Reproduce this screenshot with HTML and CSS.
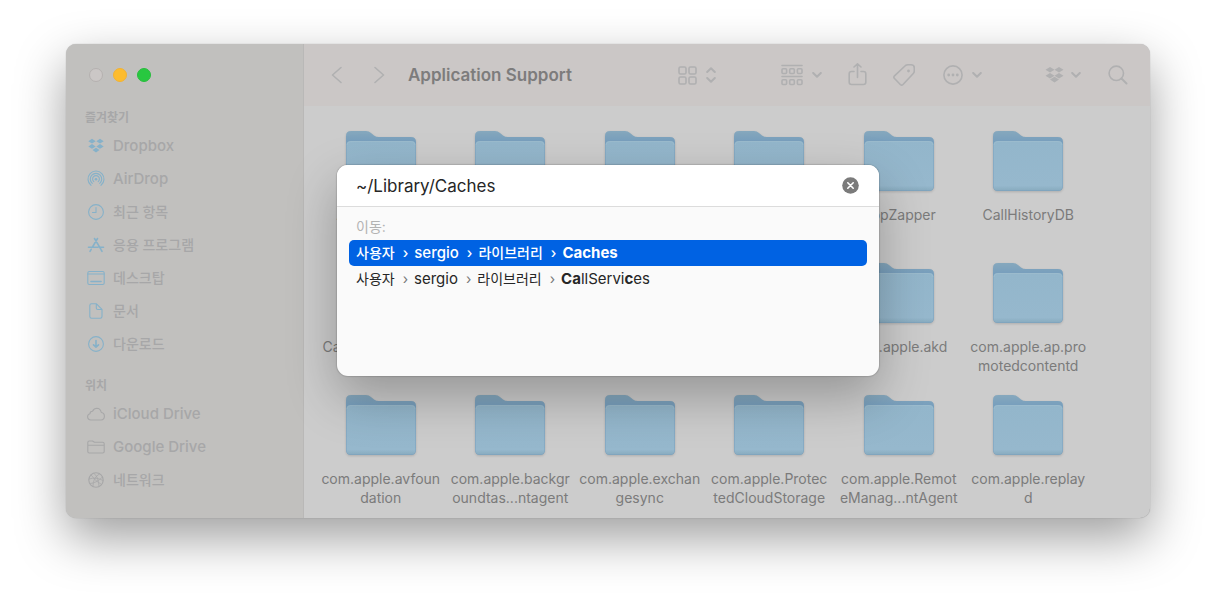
FILE: index.html
```html
<!DOCTYPE html>
<html lang="ko">
<head>
<meta charset="utf-8">
<title>Application Support</title>
<link rel="stylesheet" href="styles.css">
</head>
<body>
<svg class="defs" aria-hidden="true">
  <defs>
    <linearGradient id="front" x1="0" y1="0" x2="0" y2="1">
      <stop offset="0" stop-color="#93b6cb"/><stop offset="0.9" stop-color="#96b8cd"/><stop offset="1" stop-color="#88abbf"/>
    </linearGradient>
    <linearGradient id="back" x1="0" y1="0" x2="0" y2="1">
      <stop offset="0" stop-color="#86a8bd"/><stop offset="0.17" stop-color="#789fbd"/><stop offset="1" stop-color="#789fbd"/>
    </linearGradient>
    <symbol id="folder" viewBox="0 0 70 60">
      <path fill="url(#back)" d="M0 5Q0 0 5 0H20Q23 0 25 2L28 4.500Q30 6 33 6H65Q70 6 70 11V55Q70 60 65 60H5Q0 60 0 55Z"/>
      <path fill="url(#front)" d="M.5 14Q.5 10 5 10H65Q69.500 10 69.500 14V55Q69.500 59.500 65 59.500H5Q.5 59.500 .5 55Z"/>
      <path fill="none" stroke="#9dbccd" stroke-width=".8" d="M1 14Q1 10.500 5 10.500H65Q69 10.500 69 14"/>
    </symbol>
    <symbol id="chevron" viewBox="0 0 10 6"><path class="line bold" d="M1.200 1L5 4.800L8.800 1"/></symbol>
    <symbol id="dropbox" viewBox="0 0 19 16">
      <path fill="currentColor" d="M5 0L9.500 2.800L5 5.600L.5 2.800ZM14 0L18.500 2.800L14 5.600L9.500 2.800ZM5 5.900L9.500 8.700L5 11.500L.5 8.700ZM14 5.900L18.500 8.700L14 11.500L9.500 8.700ZM9.500 9.800L14 12.600L9.500 15.500L5 12.600Z"/>
    </symbol>
  </defs>
</svg>

<main class="window">
  <aside class="sidebar">
    <div class="lights">
      <button class="light" aria-label="닫기"></button>
      <button class="light yellow" aria-label="최소화"></button>
      <button class="light green" aria-label="확대"></button>
    </div>
    <nav>
      <h2>즐겨찾기</h2>
      <ul class="blue">
        <li><a href="#"><svg viewBox="0 0 18 18"><path fill="currentColor" d="M5 1.800L8.700 4.200L5 6.600L1.300 4.200ZM13 1.800L16.700 4.200L13 6.600L9.300 4.200ZM5 7L8.700 9.400L5 11.800L1.300 9.400ZM13 7L16.700 9.400L13 11.800L9.300 9.400ZM9 10.800L12.500 13.100L9 15.500L5.500 13.100Z"/></svg><span class="latin">Dropbox</span></a></li>
        <li><a href="#"><svg viewBox="0 0 18 18"><path class="line" d="M4 15.300A8 8 0 1 1 14 15.300M5.300 13.400A5.700 5.700 0 1 1 12.700 13.400M6.800 11.600A3.400 3.400 0 1 1 11.200 11.600"/><circle cx="9" cy="9.200" r="1.300" fill="currentColor"/></svg><span class="latin">AirDrop</span></a></li>
        <li><a href="#"><svg viewBox="0 0 18 18"><circle class="line" cx="9" cy="9" r="7.400"/><path class="line" d="M9 4.500V9.500H5.500"/></svg><span>최근 항목</span></a></li>
        <li><a href="#"><svg viewBox="0 0 18 18"><path class="line medium" d="M7.500 2.500L13.800 13.200M10.500 2.500L5.500 11M1.500 11.300H11M13.300 11.300H16.500M4.200 13.300L3 15.300M14.200 14L15 15.300"/></svg><span>응용 프로그램</span></a></li>
        <li><a href="#"><svg viewBox="0 0 18 18"><rect class="line" x=".8" y="2.500" width="16.400" height="13" rx="1.500"/><path class="line" d="M1 5H17"/><path class="line medium" d="M4 12.500H14"/></svg><span>데스크탑</span></a></li>
        <li><a href="#"><svg viewBox="0 0 18 18"><path class="line" d="M4.500 1.800H9.500L15 7.300V14.500Q15 16.200 13.300 16.200H4.500Q2.800 16.200 2.800 14.500V3.500Q2.800 1.800 4.500 1.800ZM9.300 2V6Q9.300 7.500 10.800 7.500H15"/></svg><span>문서</span></a></li>
        <li><a href="#"><svg viewBox="0 0 18 18"><circle class="line" cx="9" cy="9" r="7.400"/><path class="line medium" d="M9 5.500V12M6.500 9.800L9 12.200L11.500 9.800"/></svg><span>다운로드</span></a></li>
      </ul>
      <h2>위치</h2>
      <ul>
        <li><a href="#"><svg viewBox="0 0 18 18"><path class="line" d="M4 15Q.6 14.700 .6 11.800Q.6 9.300 3 8.800Q3 6.300 5.500 6.200Q7 3.300 9.800 3.300Q13.500 3.500 14.300 7.500Q17.400 8 17.400 11.200Q17.400 14.700 14 15Z"/></svg><span class="latin">iCloud Drive</span></a></li>
        <li><a href="#"><svg viewBox="0 0 18 18"><path class="line" d="M.8 13.500V4.500Q.8 3 2.300 3H5.500L7.500 4.300H15.700Q17.200 4.300 17.200 5.800V13.500Q17.200 15 15.700 15H2.300Q.8 15 .8 13.500ZM1 7.300H17"/></svg><span class="latin">Google Drive</span></a></li>
        <li><a href="#"><svg viewBox="0 0 18 18"><circle class="line" cx="9" cy="9" r="7.200"/><path class="line thin" d="M7 2.500Q11.500 5 12 15.500M12.500 2.800Q5.500 7 6 15.500M2 8Q9 5.500 16 9.500M3 12.500Q9 12.500 15.500 6M4 4Q9 11 14.500 13.500"/></svg><span>네트워크</span></a></li>
      </ul>
    </nav>
  </aside>

  <section class="pane">
    <header class="toolbar">
      <div class="history">
        <button aria-label="뒤로"><svg width="12" height="18" viewBox="0 0 12 18"><path class="line medium" d="M10 1.500L1.500 9L10 16.500"/></svg></button>
        <button aria-label="앞으로"><svg width="12" height="18" viewBox="0 0 12 18"><path class="line medium" d="M2 1.500L10.500 9L2 16.500"/></svg></button>
      </div>
      <h1>Application Support</h1>
      <button class="view" aria-label="보기"><svg width="19" height="19" viewBox="0 0 19 19"><g class="line medium"><rect x="1" y="1" width="7" height="7" rx="1.500"/><rect x="11" y="1" width="7" height="7" rx="1.500"/><rect x="1" y="11" width="7" height="7" rx="1.500"/><rect x="11" y="11" width="7" height="7" rx="1.500"/></g></svg><svg width="10" height="16" viewBox="0 0 10 16"><path class="line bold" d="M1.200 5L5 1.200L8.800 5M1.200 11L5 14.800L8.800 11"/></svg></button>
      <button class="group" aria-label="그룹"><svg width="22" height="22" viewBox="0 0 22 22"><path class="line medium" d="M1 1.500H21M1 12.500H21"/><g class="line medium"><rect x="1" y="4.700" width="4.600" height="4.800" rx="1"/><rect x="8.700" y="4.700" width="4.600" height="4.800" rx="1"/><rect x="16.400" y="4.700" width="4.600" height="4.800" rx="1"/><rect x="1" y="15.700" width="4.600" height="4.800" rx="1"/><rect x="8.700" y="15.700" width="4.600" height="4.800" rx="1"/><rect x="16.400" y="15.700" width="4.600" height="4.800" rx="1"/></g></svg><svg width="10" height="6"><use href="#chevron"/></svg></button>
      <button class="share" aria-label="공유"><svg width="19" height="24" viewBox="0 0 19 24"><path class="line medium" d="M6 8.500H3.500Q1.200 8.500 1.200 10.700V19.300Q1.200 21.500 3.500 21.500H15.500Q17.800 21.500 17.800 19.300V10.700Q17.800 8.500 15.500 8.500H13M9.500 14.500V1M6 4L9.500 .8L13 4"/></svg></button>
      <button class="tag" aria-label="태그"><svg width="22" height="22" viewBox="0 0 22 22"><path class="line medium" d="M12.500 1.500Q13.500 .8 15 .8H18Q21.300 .8 21.300 4V7Q21.300 8.500 20.300 9.500L10 20.500Q8.700 21.800 7.300 20.500L1.500 14.500Q.2 13.200 1.500 11.900Z"/><circle cx="15.500" cy="7" r="1.400" fill="currentColor"/></svg></button>
      <button class="more" aria-label="동작"><svg width="20" height="20" viewBox="0 0 20 20"><circle class="line medium" cx="10" cy="10" r="9.100"/><g fill="currentColor"><circle cx="5.700" cy="10" r="1.400"/><circle cx="10" cy="10" r="1.400"/><circle cx="14.300" cy="10" r="1.400"/></g></svg><svg width="10" height="6"><use href="#chevron"/></svg></button>
      <button class="cloud" aria-label="Dropbox"><svg width="19" height="16"><use href="#dropbox"/></svg><svg width="10" height="6"><use href="#chevron"/></svg></button>
      <button class="search" aria-label="검색"><svg width="20" height="20" viewBox="0 0 20 20"><circle class="line medium" cx="8.300" cy="8.300" r="7.200"/><path class="line bold" d="M13.500 13.500L18.500 18.500"/></svg></button>
    </header>

    <ul class="files">
      <li><svg class="folder"><use href="#folder"/></svg><span>AddressBook</span></li>
      <li><svg class="folder"><use href="#folder"/></svg></li>
      <li><svg class="folder"><use href="#folder"/></svg></li>
      <li><svg class="folder"><use href="#folder"/></svg></li>
      <li><svg class="folder"><use href="#folder"/></svg><span>AppZapper</span></li>
      <li><svg class="folder"><use href="#folder"/></svg><span>CallHistoryDB</span></li>
      <li><svg class="folder"><use href="#folder"/></svg><span>CallHistoryTransa<br>ctions</span></li>
      <li><svg class="folder"><use href="#folder"/></svg></li>
      <li><svg class="folder"><use href="#folder"/></svg></li>
      <li><svg class="folder"><use href="#folder"/></svg></li>
      <li><svg class="folder"><use href="#folder"/></svg><span>com.apple.akd</span></li>
      <li><svg class="folder"><use href="#folder"/></svg><span>com.apple.ap.pro<br>motedcontentd</span></li>
      <li><svg class="folder"><use href="#folder"/></svg><span>com.apple.avfoun<br>dation</span></li>
      <li><svg class="folder"><use href="#folder"/></svg><span>com.apple.backgr<br>oundtas...ntagent</span></li>
      <li><svg class="folder"><use href="#folder"/></svg><span>com.apple.exchan<br>gesync</span></li>
      <li><svg class="folder"><use href="#folder"/></svg><span>com.apple.Protec<br>tedCloudStorage</span></li>
      <li><svg class="folder"><use href="#folder"/></svg><span>com.apple.Remot<br>eManag...ntAgent</span></li>
      <li><svg class="folder"><use href="#folder"/></svg><span>com.apple.replay<br>d</span></li>
    </ul>
  </section>

  <div class="dialog" role="dialog" aria-label="폴더로 이동">
    <div class="field">
      <input type="text" value="~/Library/Caches" aria-label="이동할 폴더">
      <button class="clear" aria-label="지우기"><svg width="17" height="17" viewBox="0 0 17 17"><circle cx="8.500" cy="8.500" r="8.300" fill="#7b7b7b"/><path d="M5.800 5.800L11.200 11.200M11.200 5.800L5.800 11.200" stroke="#fff" stroke-width="1.600" stroke-linecap="round"/></svg></button>
    </div>
    <div class="results">
      <p class="hint">이동:</p>
      <ul>
        <li class="path selected"><span>사용자</span><i>›</i><span class="latin">sergio</span><i>›</i><span>라이브러리</span><i>›</i><span class="latin"><b>Caches</b></span></li>
        <li class="path"><span>사용자</span><i>›</i><span class="latin">sergio</span><i>›</i><span>라이브러리</span><i>›</i><span class="latin"><b>Ca</b>llServi<b>c</b>es</span></li>
      </ul>
    </div>
  </div>
</main>
</body>
</html>
```
FILE: styles.css
```css
* { box-sizing: border-box; }

body {
  margin: 0;
  padding: 44px 66px 87px;
  background: #fff;
  font-family: Inter, "Noto Sans CJK KR", sans-serif;
  font-size: 14px;
  line-height: 20px;
}

h1, h2, p, ul { margin: 0; padding: 0; }
ul { list-style: none; }
svg { display: block; flex: none; }
.defs { position: absolute; width: 0; height: 0; }

button {
  display: flex;
  align-items: center;
  gap: 9px;
  padding: 0;
  border: 0;
  background: none;
  color: inherit;
}

.line {
  fill: none;
  stroke: currentColor;
  stroke-width: 1.1;
  stroke-linecap: round;
  stroke-linejoin: round;
}
.line.thin { stroke-width: .8; }
.line.medium { stroke-width: 1.6; }
.line.bold { stroke-width: 2; }

.window {
  position: relative;
  display: flex;
  border-radius: 10px;
  background: #ccc;
  box-shadow: 0 0 1px rgba(0, 0, 0, .35), 0 20px 50px rgba(0, 0, 0, .38);
}

.sidebar {
  flex: 0 0 238px;
  border-right: 1px solid #b9b8b7;
  border-radius: 10px 0 0 10px;
  background: #c1c0be;
  color: #a7a7a8;
}

.lights {
  display: flex;
  align-items: center;
  gap: 10px;
  height: 62px;
  padding-left: 23px;
}
.light {
  width: 14px;
  height: 14px;
  border: 1px solid #b5b1b0;
  border-radius: 50%;
  background: #cbc7c6;
}
.light.yellow { border-color: #f2b233; background: #fdbc2e; }
.light.green { border-color: #28bd3d; background: #28c840; }

.sidebar h2 {
  padding-left: 19px;
  font-size: 12px;
  font-weight: 700;
  line-height: 23px;
}
.sidebar ul + h2 { margin-top: 14px; }
.sidebar a {
  display: flex;
  align-items: center;
  gap: 8px;
  height: 33px;
  padding-left: 21px;
  color: inherit;
  font-weight: 500;
  text-decoration: none;
}
.sidebar svg { width: 18px; height: 18px; }
.blue svg { color: #86b1c9; }
.latin { font-size: 15px; }

.pane { flex: 1; min-width: 0; }

.toolbar {
  display: flex;
  align-items: center;
  height: 62px;
  padding: 0 22px 0 27px;
  border-radius: 0 10px 0 0;
  background: #cbc7c6;
  color: #b0b0b1;
}
.history { display: flex; gap: 30px; }
.toolbar h1 {
  flex: 1;
  padding-left: 23px;
  color: #7d7c7c;
  font-size: 17px;
  font-weight: 600;
  line-height: 24px;
  white-space: nowrap;
}
.view { margin-right: 65px; }
.group, .share { margin-right: 26px; }
.tag { margin-right: 28px; }
.more { margin-right: 63px; }
.cloud { margin-right: 27px; gap: 7px; }

.files {
  display: grid;
  grid-template-columns: repeat(6, 1fr);
  gap: 19px 0;
  padding: 25px 57px 10px 12px;
}
.files li {
  display: flex;
  flex-direction: column;
  align-items: center;
  gap: 14px;
  min-height: 113px;
}
.folder {
  width: 70px;
  height: 60px;
  filter: drop-shadow(0 1px 1px rgba(0, 0, 0, .15));
}
.files span {
  color: #7b7b7b;
  font-size: 14px;
  line-height: 19px;
  text-align: center;
  white-space: nowrap;
}

.dialog {
  position: absolute;
  top: 121px;
  left: 25%;
  width: 50%;
  min-height: 211px;
  overflow: hidden;
  border-radius: 11px;
  background: #fafafa;
  box-shadow: 0 0 1px 1px rgba(0, 0, 0, .12), 0 20px 50px rgba(0, 0, 0, .27);
  color: #262626;
}

.field {
  display: flex;
  align-items: center;
  height: 42px;
  padding: 0 20px 0 19px;
  border-bottom: 1px solid #dcdcdc;
  background: #fff;
}
.field input {
  flex: 1;
  min-width: 0;
  padding: 0;
  border: 0;
  outline: 0;
  background: none;
  color: inherit;
  font: 17px/24px Inter, sans-serif;
}

.results { padding: 7px 12px; }
.hint {
  padding-left: 7px;
  color: #b3b3b3;
  font-size: 14px;
  line-height: 26px;
}
.path {
  display: flex;
  align-items: center;
  height: 26px;
  padding-left: 7px;
  border-radius: 5px;
  white-space: nowrap;
}
.path i {
  padding: 0 6px 0 8px;
  color: #777;
  font-style: normal;
}
.path b { font-weight: 700; }
.path.selected { background: #0062e3; color: #fff; font-weight: 500; }
.path.selected i { color: #fff; }
```
